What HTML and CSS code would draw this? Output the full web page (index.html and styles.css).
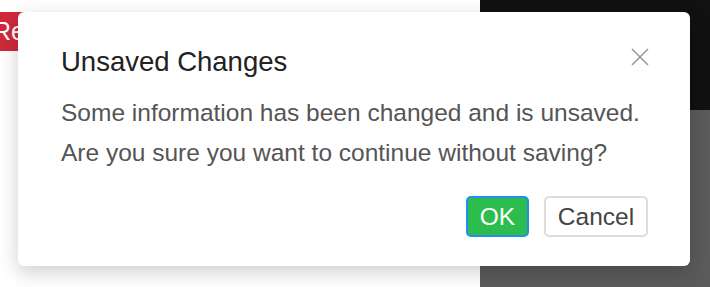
FILE: index.html
```html
<!DOCTYPE html>
<html>
<head>
<meta charset="utf-8">
<link rel="stylesheet" href="styles.css">
</head>
<body>
<div class="page">
  <div class="left">
    <button class="danger">Revert</button>
  </div>
  <div class="right">
    <div class="right-top"></div>
    <div class="right-bottom"></div>
  </div>
</div>
<div class="modal">
  <div class="modal-header">
    <h2 class="modal-title">Unsaved Changes</h2>
  </div>
  <button class="close" aria-label="Close">
    <svg width="18" height="18" viewBox="0 0 18 18"><path d="M1 1L17 17M17 1L1 17" stroke="#999" stroke-width="1.6" fill="none"/></svg>
  </button>
  <div class="modal-body">
    <p>Some information has been changed and is unsaved.<br>Are you sure you want to continue without saving?</p>
  </div>
  <div class="modal-footer">
    <button class="btn btn-ok">OK</button>
    <button class="btn btn-cancel">Cancel</button>
  </div>
</div>
</body>
</html>
```
FILE: styles.css
```css
html, body {
  margin: 0;
  padding: 0;
  width: 710px;
  height: 287px;
  overflow: hidden;
  font-family: "Liberation Sans", Arial, sans-serif;
}
.page {
  display: flex;
  width: 710px;
  height: 287px;
}
.left {
  width: 480px;
  background: #fff;
  padding-top: 12px;
  overflow: hidden;
}
.danger {
  margin-left: -7px;
  height: 39px;
  padding: 0 16px 0 0;
  background: #d0293b;
  color: #fff;
  border: none;
  border-radius: 0 4px 4px 0;
  font-family: inherit;
  font-size: 25px;
  line-height: 39px;
}
.right {
  flex: 1;
  display: flex;
  flex-direction: column;
}
.right-top {
  height: 110px;
  background: #111111;
}
.right-bottom {
  flex: 1;
  background: #5b5b5b;
}
.modal {
  position: absolute;
  left: 18px;
  top: 12px;
  width: 672px;
  height: 254px;
  box-sizing: border-box;
  background: #fff;
  border-radius: 6px;
  box-shadow: 0 6px 20px rgba(0,0,0,0.2);
  padding: 30px 42px 0 43px;
}
.modal-header {
  height: 40px;
}
.modal-title {
  margin: 0;
  font-weight: normal;
  font-size: 27.5px;
  line-height: 40px;
  color: #222;
}
.close {
  position: absolute;
  right: 41px;
  top: 36px;
  border: none;
  background: none;
  padding: 0;
  width: 18px;
  height: 18px;
  display: flex;
}
.modal-body {
  margin-top: 11px;
}
.modal-body p {
  margin: 0;
  font-size: 24.5px;
  line-height: 40px;
  color: #555;
}
.modal-footer {
  display: flex;
  justify-content: flex-end;
  gap: 15px;
  margin-top: 23px;
}
.btn {
  height: 41px;
  box-sizing: border-box;
  border-radius: 5px;
  font-family: inherit;
  font-size: 24.5px;
  padding: 0;
}
.btn-ok {
  background: #2dbc4e;
  color: #fff;
  border: 2px solid #1f8ff0;
  width: 63px;
}
.btn-cancel {
  background: #fff;
  color: #444;
  border: 2px solid #dcdcdc;
  width: 104px;
}
```
